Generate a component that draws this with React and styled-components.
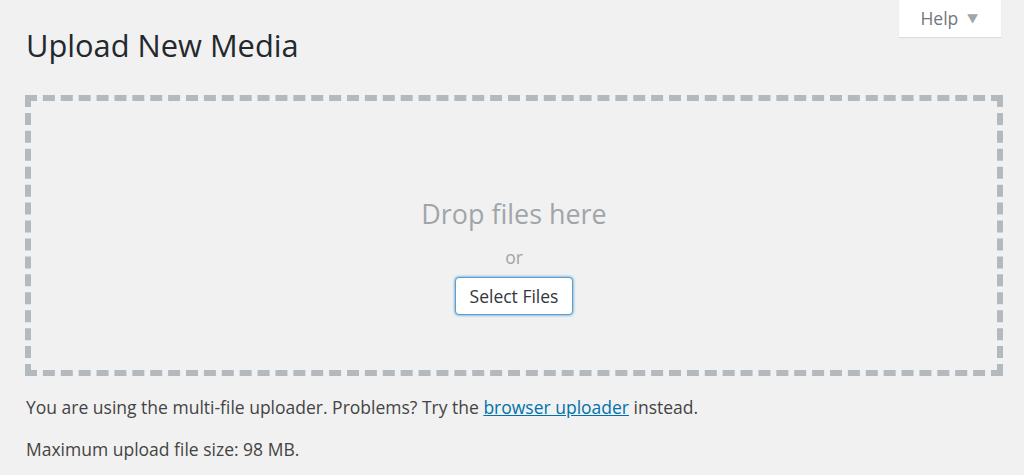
import React from "react";
import styled, { createGlobalStyle } from "styled-components";

const Global = createGlobalStyle`
  html, body { margin: 0; padding: 0; background: #f1f1f1; }
  body { font-family: "Open Sans", "Noto Sans", sans-serif; color: #444; }
`;

const Page = styled.div`
  width: 1024px;
  height: 475px;
  box-sizing: border-box;
  padding: 0 21px 0 25px;
  overflow: hidden;
`;

const TopBar = styled.div`
  display: flex;
  justify-content: flex-end;
  height: 0;
  margin-right: 2px;
`;

const HelpTab = styled.button`
  display: flex;
  align-items: center;
  gap: 10px;
  height: 37px;
  width: 102px;
  justify-content: center;
  box-sizing: border-box;
  padding: 0 2px 2px 0;
  margin: 0;
  background: #fff;
  border: none;
  box-shadow: 0 1px 1px rgba(0, 0, 0, 0.08);
  font-family: inherit;
  font-size: 17.5px;
  color: #72777c;
`;

const Arrow = styled.span`
  font-family: "DejaVu Sans", sans-serif;
  font-size: 12px;
  color: #a0a5aa;
  transform: scaleX(1.15);
`;

const Title = styled.h1`
  margin: 0;
  padding: 25px 0 0 1px;
  font-size: 30.8px;
  font-weight: 400;
  line-height: 40px;
  color: #23282d;
`;

const DropArea = styled.div`
  margin-top: 30px;
  height: 281px;
  width: 978px;
  box-sizing: border-box;
  border: 6px dashed #b4b9be;
  display: flex;
  flex-direction: column;
  align-items: center;
  padding-top: 95px;
`;

const DropText = styled.p`
  margin: 0;
  font-size: 26.9px;
  line-height: 36px;
  color: #a0a5aa;
`;

const OrText = styled.p`
  margin: 12px 0 0;
  font-size: 17.5px;
  line-height: 26px;
  color: #a0a5aa;
`;

const SelectButton = styled.button`
  margin-top: 7px;
  height: 38px;
  padding: 0 14px;
  font-family: inherit;
  font-size: 17.5px;
  color: #32373c;
  background: #fff;
  border: 1px solid #5b9dd9;
  border-radius: 4px;
  box-shadow: 0 0 3px rgba(0, 115, 170, 0.8);
`;

const Note = styled.p`
  margin: ${(p) => p.$top}px 0 0 1px;
  font-size: 17.5px;
  line-height: 26px;
  color: #444;
`;

const Link = styled.a`
  color: #0073aa;
  text-decoration: underline;
`;

export default function App() {
  return (
    <>
      <Global />
      <Page>
        <TopBar>
          <HelpTab>
            Help <Arrow>▼</Arrow>
          </HelpTab>
        </TopBar>
        <Title>Upload New Media</Title>
        <DropArea>
          <DropText>Drop files here</DropText>
          <OrText>or</OrText>
          <SelectButton>Select Files</SelectButton>
        </DropArea>
        <Note $top={18}>
          You are using the multi-file uploader. Problems? Try the{" "}
          <Link href="#">browser uploader</Link> instead.
        </Note>
        <Note $top={16}>Maximum upload file size: 98 MB.</Note>
      </Page>
    </>
  );
}
